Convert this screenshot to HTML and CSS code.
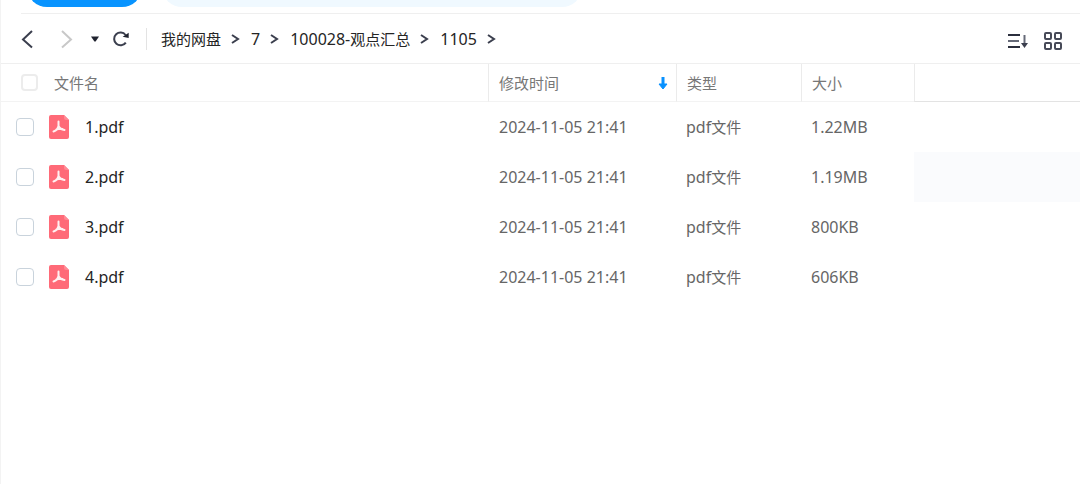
FILE: index.html
```html
<!DOCTYPE html>
<html lang="zh-CN">
<head>
<meta charset="utf-8">
<title>我的网盘</title>
<meta name="viewport" content="width=device-width, initial-scale=1">
<link rel="stylesheet" href="styles.css">
</head>
<body>
<main class="app">
  <header class="topbar">
    <button class="primary" type="button" aria-label="上传"></button>
    <input class="search" type="search" aria-label="搜索">
  </header>

  <div class="toolbar">
    <div class="nav">
      <button class="icon-btn" type="button" aria-label="后退"><svg width="16" height="20" viewBox="0 0 16 20"><path d="M14 2 5 10.500l9 8" fill="none" stroke="#3b3f4e" stroke-width="2"/></svg></button>
      <button class="icon-btn forward" type="button" aria-label="前进" disabled><svg width="16" height="20" viewBox="0 0 16 20"><path d="m4 2 9 8.500-9 8" fill="none" stroke="#c8c8c8" stroke-width="2"/></svg></button>
      <button class="icon-btn history" type="button" aria-label="历史"><svg width="10" height="8" viewBox="0 0 10 8"><path d="M1 1.500h8L5.600 6.500H4.400Z" fill="#20232f"/></svg></button>
      <button class="icon-btn" type="button" aria-label="刷新"><svg width="18" height="18" viewBox="0 0 18 18"><path d="M13.800 12.600A6.400 6.400 0 1 1 13.600 5" fill="none" stroke="#3b3f4e" stroke-width="2"/><path d="M16.700 2.800v5.200l-6-1.300Z" fill="#20232f"/></svg></button>
    </div>
    <nav class="crumbs" aria-label="路径">
      <a href="#"><span class="zh">我的网盘</span></a>
      <svg class="sep" width="10" height="12" viewBox="0 0 10 12"><path d="m1 2 6 4-6 4" /></svg>
      <a href="#">7</a>
      <svg class="sep" width="10" height="12" viewBox="0 0 10 12"><path d="m1 2 6 4-6 4" /></svg>
      <a href="#">100028-<span class="zh">观点汇总</span></a>
      <svg class="sep" width="10" height="12" viewBox="0 0 10 12"><path d="m1 2 6 4-6 4" /></svg>
      <a href="#">1105</a>
      <svg class="sep" width="10" height="12" viewBox="0 0 10 12"><path d="m1 2 6 4-6 4" /></svg>
    </nav>
    <div class="views">
      <button class="icon-btn" type="button" aria-label="排序"><svg width="22" height="18" viewBox="0 0 22 18"><path d="M1 3h12M1 15h12" stroke="#2b2f3d" stroke-width="2"/><path d="M1 9h11" stroke="#666a78" stroke-width="2"/><path d="M17.500 3v9" stroke="#666a78" stroke-width="2"/><path d="M14 11h7l-3.500 5Z" fill="#3b3f4e"/></svg></button>
      <button class="icon-btn" type="button" aria-label="网格视图"><svg width="20" height="20" viewBox="0 0 20 20"><g fill="none" stroke="#474a58" stroke-width="2"><rect x="2" y="2" width="6" height="6" rx="1"/><rect x="12" y="2" width="6" height="6" rx="1"/><rect x="2" y="12" width="6" height="6" rx="1"/><rect x="12" y="12" width="6" height="6" rx="1"/></g></svg></button>
    </div>
  </div>

  <svg width="0" height="0" class="defs" aria-hidden="true">
    <symbol id="pdf" viewBox="0 0 22 26">
      <path d="M3 1h13l5 5v17a2 2 0 0 1-2 2H3a2 2 0 0 1-2-2V3a2 2 0 0 1 2-2Z" fill="#ff6a78"/>
      <path d="m16 1 5 5h-3a2 2 0 0 1-2-2Z" fill="#ff8a95"/>
      <path d="M10.500 7.500v4.500C10 14.500 8.500 16.500 5.500 17.500M10.500 12c1 2.200 3 3.700 6 4M8.500 15.500c2-.9 4-1.100 6-.6" fill="none" stroke="#fff0f1" stroke-width="2" stroke-linecap="round"/>
    </symbol>
  </svg>

  <table class="files">
    <colgroup><col class="c-name"><col class="c-time"><col class="c-type"><col class="c-size"><col></colgroup>
    <thead>
      <tr>
        <th scope="col"><label class="name head"><input class="check" type="checkbox"><span>文件名</span></label></th>
        <th scope="col"><div class="sorted"><span>修改时间</span><svg width="10" height="14" viewBox="0 0 10 14"><path d="M5 1v8" stroke="#0891ff" stroke-width="3"/><path d="M1 8h8l-4 5Z" fill="#0891ff" stroke="#0891ff" stroke-linejoin="round"/></svg></div></th>
        <th scope="col">类型</th>
        <th scope="col">大小</th>
        <th class="rest"></th>
      </tr>
    </thead>
    <tbody>
      <tr><td><label class="name"><input class="check" type="checkbox"><svg width="22" height="26"><use href="#pdf"/></svg><span>1.pdf</span></label></td><td>2024-11-05 21:41</td><td>pdf<span class="zh">文件</span></td><td>1.22MB</td><td></td></tr>
      <tr class="active"><td><label class="name"><input class="check" type="checkbox"><svg width="22" height="26"><use href="#pdf"/></svg><span>2.pdf</span></label></td><td>2024-11-05 21:41</td><td>pdf<span class="zh">文件</span></td><td>1.19MB</td><td></td></tr>
      <tr><td><label class="name"><input class="check" type="checkbox"><svg width="22" height="26"><use href="#pdf"/></svg><span>3.pdf</span></label></td><td>2024-11-05 21:41</td><td>pdf<span class="zh">文件</span></td><td>800KB</td><td></td></tr>
      <tr><td><label class="name"><input class="check" type="checkbox"><svg width="22" height="26"><use href="#pdf"/></svg><span>4.pdf</span></label></td><td>2024-11-05 21:41</td><td>pdf<span class="zh">文件</span></td><td>606KB</td><td></td></tr>
    </tbody>
  </table>
</main>
</body>
</html>
```
FILE: styles.css
```css
* { box-sizing: border-box; }

body {
  margin: 0;
  background: #fff;
  color: #252525;
  font: 16px/24px "Noto Sans", "Noto Sans CJK SC", sans-serif;
}

svg { display: block; flex: none; }
.defs { position: absolute; }
.zh { font-size: 15px; }

.app {
  min-height: 100vh;
  border-left: 1px solid #f3f3f3;
}

.topbar {
  display: flex;
  align-items: flex-end;
  gap: 20px;
  height: 14px;
  margin-left: 20px;
  padding: 0 0 6px 6px;
  border-bottom: 1px solid #efefef;
  overflow: hidden;
}

.primary {
  flex: none;
  width: 115px;
  height: 40px;
  border: 0;
  border-radius: 20px;
  background: #0894ff;
}

.search {
  flex: none;
  width: 40%;
  max-width: 420px;
  height: 40px;
  border: 0;
  border-radius: 20px;
  background: #f0f9ff;
  appearance: none;
}

.toolbar {
  display: flex;
  align-items: center;
  height: 50px;
  padding: 0 17px;
  border-bottom: 1px solid #efefef;
}

.icon-btn {
  display: block;
  padding: 0;
  border: 0;
  background: none;
}

.nav {
  display: flex;
  align-items: center;
  height: 22px;
  padding-right: 16px;
  border-right: 1px solid #e3e3e3;
}
.forward { margin-left: 24px; }
.history { margin: 0 12px 0 16px; }

.crumbs {
  display: flex;
  align-items: center;
  gap: 10px;
  padding-left: 14px;
}
.crumbs a { color: #252525; text-decoration: none; }
.sep { fill: none; stroke: #3b3f4e; stroke-width: 2; }

.views {
  display: flex;
  align-items: center;
  gap: 14px;
  margin-left: auto;
  padding-top: 4px;
}

.files {
  width: 100%;
  table-layout: fixed;
  border-collapse: separate;
  border-spacing: 0;
  color: #666;
}
.c-name { width: 487px; }
.c-time { width: 188px; }
.c-type { width: 125px; }
.c-size { width: 113px; }

th, td { padding: 0 8px 0 11px; text-align: left; }
td:nth-child(n+3) { padding-left: 10px; }

th {
  height: 38px;
  padding-left: 10px;
  border-left: 1px solid #ebebeb;
  border-bottom: 1px solid #f3f3f3;
  color: #777;
  font-size: 15px;
  font-weight: 400;
}
th:first-child { border-left: 0; }
th:first-child, td:first-child { padding-left: 15px; }
.files .rest { border-bottom-color: #e3e3e3; }

td { height: 50px; }
.active td:last-child { background: #fafbfd; }

.name {
  display: flex;
  align-items: center;
  color: #252525;
}
.name svg { margin: 0 15px 0 14px; }
.head { gap: 16px; padding-left: 5px; color: #777; }

.sorted {
  display: flex;
  align-items: center;
  justify-content: space-between;
}

.check {
  appearance: none;
  flex: none;
  width: 18px;
  height: 18px;
  margin: 0;
  border: 1px solid #c9d3dc;
  border-radius: 4px;
  background: #fff;
}
.head .check { width: 17px; height: 17px; border: 2px solid #ececec; }
.check:checked { background: #0894ff; }
```
